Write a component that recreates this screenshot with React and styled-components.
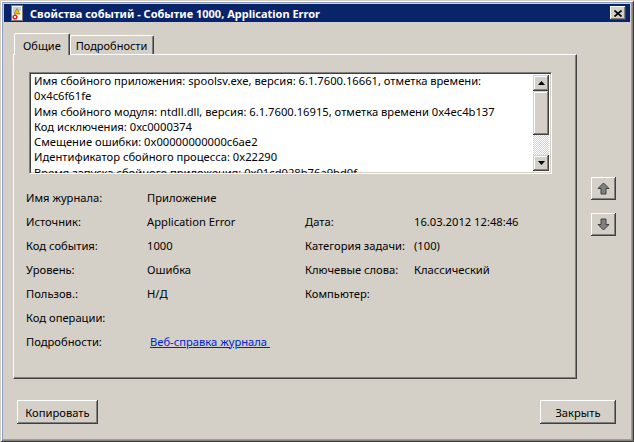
import React from 'react'
import styled, { createGlobalStyle } from 'styled-components'

const GlobalStyle = createGlobalStyle`
  html, body { margin: 0; padding: 0; background: #d4d0c8; }
  body { font-family: "Noto Sans", "DejaVu Sans", sans-serif; font-size: 11px; color: #000; }
`

const details = [
  'Имя сбойного приложения: spoolsv.exe, версия: 6.1.7600.16661, отметка времени:',
  '0x4c6f61fe',
  'Имя сбойного модуля: ntdll.dll, версия: 6.1.7600.16915, отметка времени 0x4ec4b137',
  'Код исключения: 0xc0000374',
  'Смещение ошибки: 0x00000000000c6ae2',
  'Идентификатор сбойного процесса: 0x22290',
  'Время запуска сбойного приложения: 0x01cd028b76a9bd0f',
]

const fields = [
  ['Имя журнала:', 'Приложение', '', ''],
  ['Источник:', 'Application Error', 'Дата:', '16.03.2012 12:48:46'],
  ['Код события:', '1000', 'Категория задачи:', '(100)'],
  ['Уровень:', 'Ошибка', 'Ключевые слова:', 'Классический'],
  ['Пользов.:', 'Н/Д', 'Компьютер:', ''],
  ['Код операции:', '', '', ''],
]

function TitleIcon() {
  return (
    <svg width="14" height="16" viewBox="0 0 14 16">
      <rect x="1.5" y="0.5" width="11" height="15" fill="#f4f4f4" stroke="#7a7a7a" />
      <path d="M3 3h8M3 5h8M3 7h6" stroke="#9aa4c0" />
      <path d="M7 3.5L10 9H4z" fill="#f2c200" stroke="#8a6d00" strokeWidth="0.6" />
      <circle cx="5" cy="12" r="2.6" fill="#d42020" />
      <path d="M3.8 10.8l2.4 2.4M6.2 10.8l-2.4 2.4" stroke="#fff" strokeWidth="0.9" />
    </svg>
  )
}

function ArrowIcon({ down }) {
  return (
    <svg width="13" height="13" viewBox="0 0 13 13" style={{ transform: down ? 'rotate(180deg)' : 'none' }}>
      <path d="M6.5 1L12 6.5H9V12H4V6.5H1z" fill="#808080" stroke="#404040" strokeWidth="1" strokeLinejoin="round" />
    </svg>
  )
}

export default function App() {
  return (
    <>
      <GlobalStyle />
      <Window>
        <TitleBar>
          <TitleIcon />
          <TitleText>Свойства событий - Событие 1000, Application Error</TitleText>
          <CloseButton>
            <svg width="8" height="7" viewBox="0 0 8 7">
              <path d="M0.5 0.5l7 6M7.5 0.5l-7 6" stroke="#000" strokeWidth="1.6" />
            </svg>
          </CloseButton>
        </TitleBar>
        <Content>
          <Tabs>
            <Tab active>Общие</Tab>
            <Tab>Подробности</Tab>
          </Tabs>
          <MainRow>
            <Panel>
              <TextBox>
                <TextScroll>
                  {details.map((line) => (
                    <Line key={line}>{line}</Line>
                  ))}
                </TextScroll>
                <ScrollBar>
                  <ScrollArrow>
                    <svg width="7" height="4" viewBox="0 0 7 4"><path d="M3.5 0L7 4H0z" fill="#000" /></svg>
                  </ScrollArrow>
                  <Thumb />
                  <Track />
                  <ScrollArrow>
                    <svg width="7" height="4" viewBox="0 0 7 4"><path d="M0 0h7L3.5 4z" fill="#000" /></svg>
                  </ScrollArrow>
                </ScrollBar>
              </TextBox>
              <FieldGrid>
                {fields.map((row) =>
                  row.map((cell, i) => <Cell key={row[0] + i}>{cell}</Cell>)
                )}
                <Cell>Подробности:</Cell>
                <Cell>
                  <Link>Веб-справка журнала </Link>
                </Cell>
              </FieldGrid>
            </Panel>
            <Side>
              <NavButton><ArrowIcon /></NavButton>
              <NavButton><ArrowIcon down /></NavButton>
            </Side>
          </MainRow>
          <Footer>
            <Button width="81px">Копировать</Button>
            <Button width="76px">Закрыть</Button>
          </Footer>
        </Content>
      </Window>
    </>
  )
}

const Window = styled.div`
  width: 634px;
  height: 442px;
  box-sizing: border-box;
  padding: 4px;
  background: #d4d0c8;
  box-shadow: inset 1px 1px #d4d0c8, inset -1px -1px #404040, inset 2px 2px #fff, inset -2px -2px #808080,
    inset 0 0 0 3px #8a9fc3;
  display: flex;
  flex-direction: column;`

const TitleBar = styled.div`
  height: 18px;
  background: #0a246a;
  display: flex;
  align-items: center;
  padding: 0 4px 0 6px;
  gap: 6px;`

const TitleText = styled.span`
  flex: 1;
  color: #fff;
  font-family: "Noto Sans", "DejaVu Sans", sans-serif;
  font-weight: bold;
  font-size: 11px;
  white-space: nowrap;`

const CloseButton = styled.div`
  width: 16px;
  height: 14px;
  background: #d4d0c8;
  display: flex;
  align-items: center;
  justify-content: center;
  box-shadow: inset -1px -1px #404040, inset 1px 1px #fff, inset -2px -2px #808080;`

const Content = styled.div`
  flex: 1;
  padding: 10px 14px 0 9px;
  display: flex;
  flex-direction: column;`

const Tabs = styled.div`
  display: flex;
  align-items: flex-end;
  height: 22px;
  padding-left: 1px;`

const Tab = styled.div`
  height: ${(p) => (p.active ? '22px' : '19px')};
  box-sizing: border-box;
  padding: ${(p) => (p.active ? '2px 8px 0 8px' : '1px 6px 0 5px')};
  display: flex;
  align-items: center;
  border-top: 1px solid #fff;
  border-left: 1px solid #fff;
  border-right: 1px solid #404040;
  border-radius: 2px 2px 0 0;
  box-shadow: inset -1px 0 #808080;
  position: relative;
  z-index: ${(p) => (p.active ? 1 : 0)};
  margin-bottom: ${(p) => (p.active ? '-1px' : '0')};
  background: #d4d0c8;`

const MainRow = styled.div`
  display: flex;
  gap: 14px;`

const Panel = styled.div`
  width: 564px;
  height: 325px;
  box-sizing: border-box;
  border-top: 1px solid #fff;
  border-left: 1px solid #fff;
  border-right: 1px solid #404040;
  border-bottom: 1px solid #404040;
  box-shadow: inset -1px -1px #808080;
  padding: 17px 24px 0 15px;`

const TextBox = styled.div`
  height: 102px;
  box-sizing: border-box;
  display: flex;
  border-top: 1px solid #808080;
  border-left: 1px solid #808080;
  border-right: 1px solid #fff;
  border-bottom: 1px solid #fff;
  box-shadow: inset 1px 1px #404040, inset -1px -1px #d4d0c8;
  background: #fff;
  overflow: hidden;`

const TextScroll = styled.div`
  flex: 1;
  padding: 0 0 0 4px;
  overflow: hidden;`

const Line = styled.div`
  font-size: 11.2px;
  line-height: 15.3px;
  white-space: nowrap;`

const ScrollBar = styled.div`
  width: 16px;
  margin: 2px 2px 2px 0;
  display: flex;
  flex-direction: column;`

const ScrollArrow = styled.div`
  height: 16px;
  background: #d4d0c8;
  display: flex;
  align-items: center;
  justify-content: center;
  box-shadow: inset -1px -1px #404040, inset 1px 1px #d4d0c8, inset -2px -2px #808080, inset 2px 2px #fff;`

const Thumb = styled.div`
  height: 44px;
  background: #d4d0c8;
  box-shadow: inset -1px -1px #404040, inset 1px 1px #d4d0c8, inset -2px -2px #808080, inset 2px 2px #fff;`

const Track = styled.div`
  flex: 1;
  background-color: #eceae6;
  background-image: repeating-conic-gradient(#d4d0c8 0 25%, #fff 0 50%);
  background-size: 2px 2px;`

const FieldGrid = styled.div`
  display: grid;
  grid-template-columns: 121px 158px 109px 1fr;
  grid-auto-rows: 24px;
  margin: 11px 0 0 -3px;
  align-items: center;`

const Cell = styled.div`
  font-size: 11.2px;
  white-space: nowrap;`

const Link = styled.span`
  color: #0022cc;
  text-decoration: underline;
  padding-left: 3px;
  white-space: pre;`

const Side = styled.div`
  padding-top: 123px;
  display: flex;
  flex-direction: column;
  gap: 13px;`

const NavButton = styled.div`
  width: 25px;
  height: 23px;
  display: flex;
  align-items: center;
  justify-content: center;
  background: #d4d0c8;
  box-shadow: inset -1px -1px #404040, inset 1px 1px #fff, inset -2px -2px #808080;`

const Footer = styled.div`
  display: flex;
  justify-content: space-between;
  padding: 21px 0 0 4px;`

const Button = styled.div`
  width: ${(p) => p.width};
  height: 24px;
  font-size: 11.2px;
  display: flex;
  align-items: center;
  justify-content: center;
  background: #d4d0c8;
  box-shadow: inset -1px -1px #404040, inset 1px 1px #fff, inset -2px -2px #808080;`
